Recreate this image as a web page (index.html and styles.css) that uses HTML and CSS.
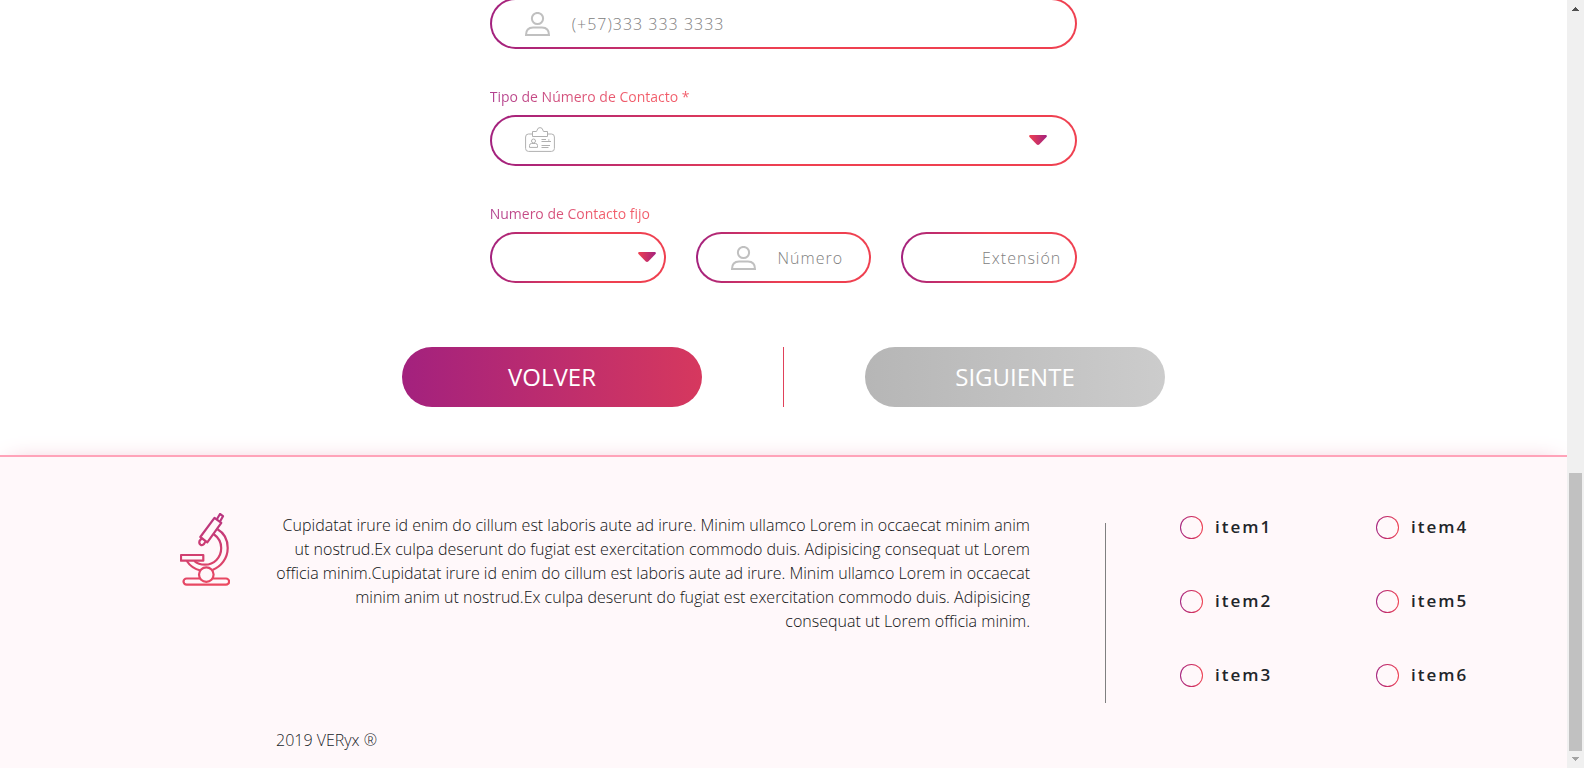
FILE: index.html
```html
<!DOCTYPE html>
<html lang="es">
<head>
<meta charset="utf-8">
<meta name="viewport" content="width=device-width, initial-scale=1">
<title>VERyx</title>
<link rel="stylesheet" href="styles.css">
</head>
<body>
<svg class="defs" width="0" height="0" aria-hidden="true">
  <defs>
    <linearGradient id="caret-fill" x1="0" x2="1" y1="0" y2="0">
      <stop offset="0" stop-color="#ef4050"/><stop offset="1" stop-color="#a3217e"/>
    </linearGradient>
    <linearGradient id="scope-stroke" gradientUnits="userSpaceOnUse" x1="18" y1="0" x2="32" y2="74">
      <stop offset="0" stop-color="#b33382"/><stop offset="1" stop-color="#ec4a60"/>
    </linearGradient>
    <symbol id="person" viewBox="0 0 25 24">
      <circle cx="12.5" cy="6.5" r="5.6"/>
      <path d="M1 23 C1 18 4 15.500 8 15.500 H17 C21 15.500 24 18 24 23 Z"/>
    </symbol>
    <symbol id="caret" viewBox="0 0 18 10">
      <path d="M1 0 H17 Q18.500 .6 17.500 2 L10.500 9.300 Q9 10.600 7.500 9.300 L.5 2 Q-.5 .6 1 0 Z" fill="url(#caret-fill)"/>
    </symbol>
  </defs>
</svg>
<div class="page">
  <main class="content">
    <form class="form">
      <div class="field">
        <svg class="icon-person"><use href="#person"/></svg>
        <input class="input" type="tel" placeholder="(+57)333 333 3333" aria-label="Número de Contacto">
      </div>
      <label class="label" for="tipo">Tipo de Número de Contacto *</label>
      <div class="field">
        <svg class="icon-card" viewBox="0 0 30 25">
          <path d="M7.500 7 H3.500 Q.6 7 .6 10 V21.500 Q.6 24.400 3.500 24.400 H26.500 Q29.400 24.400 29.400 21.500 V10 Q29.400 7 26.500 7 H22.500"/>
          <path d="M7.500 9.500 V4.500 H11 Q12 4.500 12 3.400 Q12.500 .6 15 .6 T18 3.400 Q18 4.500 19 4.500 H22.500 V9.500 Z"/>
          <circle cx="8.500" cy="14" r="2"/>
          <path d="M4.500 20.400 V18.500 Q4.500 16.500 6.500 16.500 H10.500 Q12.500 16.500 12.500 18.500 V20.400 Z"/>
          <path d="M16.500 12.500 H21 M16.500 14.500 H26 M16.500 18.500 H25 M16.500 20.500 H23.500 M23 13 H24.500"/>
        </svg>
        <select class="input" id="tipo"><option></option></select>
        <svg class="caret"><use href="#caret"/></svg>
      </div>
      <label class="label" for="indicativo">Numero de Contacto fijo</label>
      <div class="row">
        <div class="field">
          <select class="input" id="indicativo"><option></option></select>
          <svg class="caret caret-near"><use href="#caret"/></svg>
        </div>
        <div class="field">
          <svg class="icon-person"><use href="#person"/></svg>
          <input class="input" type="text" placeholder="Número" aria-label="Número">
        </div>
        <div class="field">
          <input class="input input-end" type="text" placeholder="Extensión" aria-label="Extensión">
        </div>
      </div>
    </form>
    <div class="actions">
      <button class="button" type="button">VOLVER</button>
      <span class="actions-line"></span>
      <button class="button" type="button" disabled>SIGUIENTE</button>
    </div>
    <footer class="footer">
      <svg class="scope" viewBox="0 0 50 73">
        <path d="M34.500 4.800 L41.300 9.800 L27.300 29.300 L20.300 24 Z"/>
        <path d="M37 6 L40 1 L43 3.200 L40 8.500"/>
        <path d="M21.500 25.500 L19.500 28 Q18.800 30.500 20.500 31.700 Q22.500 32.700 24 31 L25.500 28.500"/>
        <path d="M37.500 16.300 C44 20 47.700 27 47.700 35 C47.700 45.500 41 53.500 32.500 57"/>
        <path d="M33.500 21 C38.500 24.500 41.200 29 41.200 35 C41.200 44.500 34 51.700 25 51.700 C21 51.700 17 50.500 14.300 48"/>
        <path d="M6.800 48 C10 53 14.500 56 20.500 57.500"/>
        <rect x="1" y="42" width="22.300" height="5.700"/>
        <circle cx="26.300" cy="61.600" r="7.300"/>
        <path d="M20 65.500 H6.600 A3.100 3.100 0 0 0 6.600 71.700 H46 A3.100 3.100 0 0 0 46 65.500 H32.600"/>
      </svg>
      <div class="about">
        <p class="about-text">Cupidatat irure id enim do cillum est laboris aute ad irure. Minim ullamco Lorem in occaecat minim anim ut nostrud.Ex culpa deserunt do fugiat est exercitation commodo duis. Adipisicing consequat ut Lorem officia minim.Cupidatat irure id enim do cillum est laboris aute ad irure. Minim ullamco Lorem in occaecat minim anim ut nostrud.Ex culpa deserunt do fugiat est exercitation commodo duis. Adipisicing <br>consequat ut Lorem officia minim.</p>
        <p class="copyright">2019 VERyx ®</p>
      </div>
      <span class="footer-line"></span>
      <div class="items">
        <label class="item"><input class="radio" type="radio" name="item">item1</label>
        <label class="item"><input class="radio" type="radio" name="item">item2</label>
        <label class="item"><input class="radio" type="radio" name="item">item3</label>
        <label class="item"><input class="radio" type="radio" name="item">item4</label>
        <label class="item"><input class="radio" type="radio" name="item">item5</label>
        <label class="item"><input class="radio" type="radio" name="item">item6</label>
      </div>
    </footer>
  </main>
  <div class="scrollbar" aria-hidden="true">
    <svg class="scroll-arrow" viewBox="0 0 7 4"><path d="M3 0 H4 V1 H5 V2 H6 V3 H7 V4 H0 V3 H1 V2 H2 V1 H3 Z" fill="#505050"/></svg>
    <span class="scroll-thumb"></span>
    <svg class="scroll-arrow" viewBox="0 0 7 4"><path d="M0 0 H7 V1 H6 V2 H5 V3 H4 V4 H3 V3 H2 V2 H1 V1 H0 Z" fill="#a3a3a3"/></svg>
  </div>
</div>
</body>
</html>
```
FILE: styles.css
```css
:root {
  --purple: #a3217e;
  --red: #ef4050;
  --brand: linear-gradient(90deg, var(--purple), var(--red) 50%);
}

* { box-sizing: border-box; }

body {
  margin: 0;
  background: #fff;
  color: #212529;
  font: 300 16px/24px "Open Sans", "Noto Sans", sans-serif;
}

p { margin: 0; }

.defs { position: absolute; }

.page {
  display: flex;
  height: 100vh;
  overflow: hidden;
}

.content {
  display: flex;
  flex: 1;
  flex-direction: column;
  margin-top: -2px;
}

.form {
  width: 37.5%;
  margin: 0 auto;
}

.field {
  position: relative;
  height: 51px;
  border: 2px solid transparent;
  border-radius: 26px;
  background: linear-gradient(#fff, #fff) padding-box, var(--brand) border-box;
}

.input {
  display: block;
  width: 100%;
  height: 100%;
  padding: 0 14px 0 80px;
  border: 0;
  border-radius: 24px;
  outline: 0;
  background: transparent;
  color: #495057;
  font: inherit;
  letter-spacing: 1px;
  appearance: none;
}

.input::placeholder {
  color: #808080;
  opacity: 1;
}

.input-end {
  padding-left: 14px;
  text-align: right;
}

.icon-person,
.icon-card {
  position: absolute;
  top: 12px;
  left: 33px;
  fill: none;
  pointer-events: none;
}

.icon-person {
  width: 25px;
  height: 24px;
  stroke: #c0c0c0;
  stroke-width: 2;
}

.icon-card {
  top: 10px;
  width: 30px;
  height: 25px;
  stroke: #b0b0b0;
  stroke-width: 1;
}

.caret {
  position: absolute;
  top: 18px;
  right: 28px;
  width: 18px;
  height: 10px;
  pointer-events: none;
}

.caret-near { right: 8px; }

.label {
  display: block;
  width: fit-content;
  margin: 36px 0 6px;
  background: linear-gradient(90deg, var(--purple), var(--red) 70%);
  background-clip: text;
  -webkit-background-clip: text;
  color: transparent;
  font-size: 14px;
  font-weight: 400;
  opacity: 0.85;
}

.row {
  display: grid;
  grid-template-columns: repeat(3, 1fr);
  gap: 30px;
}

.actions {
  display: flex;
  justify-content: center;
  gap: 81px;
  margin: 64px 0 48px;
}

.actions-line {
  width: 1px;
  background: #e0415a;
}

.button {
  width: 300px;
  height: 60px;
  padding: 0;
  border: 0;
  border-radius: 30px;
  background: linear-gradient(90deg, var(--purple), #d6385e);
  color: #fff;
  font: 400 24px/36px "Open Sans", "Noto Sans", sans-serif;
}

.button:disabled {
  background: linear-gradient(90deg, #b6b6b6, #ccc);
}

.footer {
  display: flex;
  flex: 1;
  align-items: flex-start;
  padding: 56px 99px 16px 180px;
  border-top: 2px solid #ffa3b9;
  background: #fff8fa;
  box-shadow: 0 0 24px -10px #e8a0b8;
}

.scope {
  flex: none;
  width: 50px;
  height: 73px;
  fill: none;
  stroke: url(#scope-stroke);
  stroke-width: 2.2;
  stroke-linejoin: round;
}

.about {
  display: flex;
  flex: 1;
  flex-direction: column;
  align-self: stretch;
  justify-content: space-between;
  margin: 0 75px 0 40px;
}

.about-text {
  color: #101214;
  text-align: right;
}

.copyright { padding-left: 6px; }

.footer-line {
  width: 1px;
  height: 180px;
  margin-top: 10px;
  background: #808080;
}

.items {
  display: grid;
  grid-auto-flow: column;
  grid-template-rows: repeat(3, 24px);
  gap: 50px 104px;
  margin: 2px 0 0 74px;
}

.item {
  display: flex;
  align-items: center;
  gap: 12px;
  width: 92px;
  font-size: 17px;
  font-weight: 600;
  line-height: 22px;
  letter-spacing: 2px;
}

.radio {
  flex: none;
  width: 23px;
  height: 23px;
  margin: 0;
  border: 1px solid transparent;
  border-radius: 50%;
  background: linear-gradient(#fff8fa, #fff8fa) padding-box, linear-gradient(90deg, var(--purple), var(--red)) border-box;
  appearance: none;
}

.radio:checked {
  background: linear-gradient(90deg, var(--purple), var(--red)) border-box;
}

.scrollbar {
  z-index: 1;
  display: flex;
  flex-direction: column;
  align-items: center;
  width: 17px;
  padding: 7px 0;
  background: #f0f0f0;
}

.scroll-arrow {
  width: 7px;
  height: 4px;
}

.scroll-thumb {
  width: 13px;
  height: 278px;
  margin: auto 0 6px;
  background: #c1c1c1;
}
```
